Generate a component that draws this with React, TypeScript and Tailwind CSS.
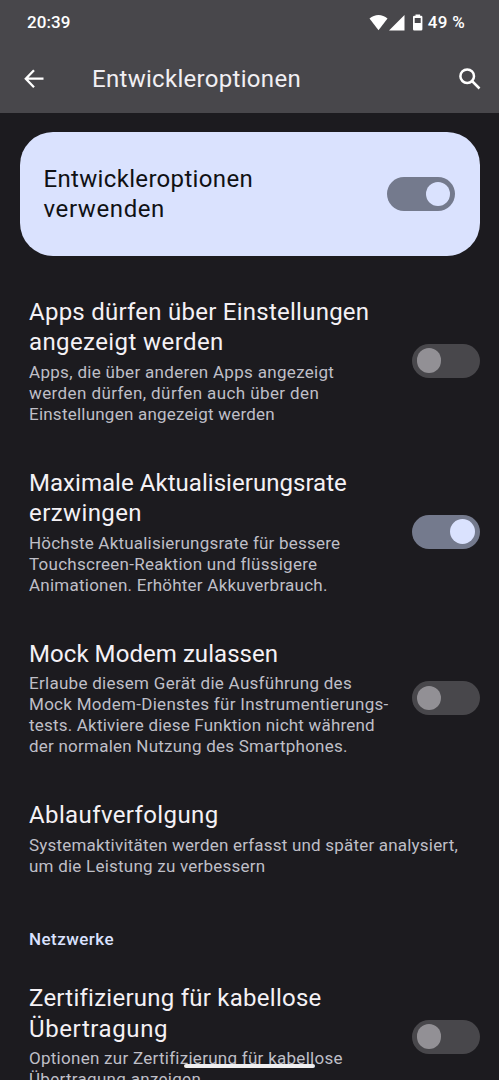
import React from "react";

type Line = { text: string; tracking?: string };

function Lines({ lines }: { lines: Line[] }) {
  return (
    <>
      {lines.map((line) => (
        <span key={line.text} className={`block whitespace-nowrap ${line.tracking ?? ""}`}>
          {line.text}
        </span>
      ))}
    </>
  );
}

function Toggle({ on = false }: { on?: boolean }) {
  return (
    <div
      role="switch"
      aria-checked={on}
      className={`flex h-[34px] w-[68px] shrink-0 items-center rounded-full px-[5px] ${
        on ? "justify-end bg-[#747a8d]" : "justify-start bg-[#48474b]"
      }`}
    >
      <div className={`size-[24.5px] rounded-full ${on ? "bg-[#dae2fe]" : "bg-[#929095]"}`} />
    </div>
  );
}

function Preference({ title, summary, on }: { title: Line[]; summary: Line[]; on?: boolean }) {
  return (
    <div className="flex shrink-0 items-center justify-between py-[21.5px] pr-[19.5px] pl-[29px]">
      <div className="min-w-0">
        <h2 className="mb-[4px] text-[24px] leading-[30.5px] text-[#f4f1f5]">
          <Lines lines={title} />
        </h2>
        <p className="text-[17px] leading-[21px] text-[#bfbfc7]">
          <Lines lines={summary} />
        </p>
      </div>
      {on !== undefined && <Toggle on={on} />}
    </div>
  );
}

export default function App() {
  return (
    <div className="relative flex h-[1080px] w-[499px] flex-col overflow-hidden bg-[#1c1b1f] font-['Roboto','Noto_Sans',sans-serif]">
      <header className="h-[113px] shrink-0 bg-[#48474b] text-white">
        <div className="flex h-[45px] items-center justify-between pt-[1px] pr-[34px] pl-[27px] text-[17px] font-medium">
          <span className="tracking-[0.1px]">20:39</span>
          <div className="flex items-center">
            <svg className="h-[18px] w-[56px]" viewBox="0 0 56 18" fill="currentColor">
              <path d="M0.5 4.6C5.7-.3 13.3-.3 18.5 4.6L9.5 16.2Z" />
              <path d="M35.5 1v15.5H20Z" />
              <path
                fillRule="evenodd"
                d="M46.5.5h4.6v1.3h1q1.3 0 1.3 1.3v12.2q0 1.3-1.3 1.3h-6.8q-1.3 0-1.3-1.3v-12.2q0-1.3 1.3-1.3h1.2ZM45.7 3.9v5h6v-5Z"
              />
            </svg>
            <span className="ml-[3px] tracking-[0.3px] whitespace-nowrap">49 %</span>
          </div>
        </div>
        <div className="flex h-[68px] items-center pr-[17px] pl-[24px]">
          <svg className="size-[20px] shrink-0" viewBox="0 0 20 20" fill="none" stroke="currentColor" strokeWidth="2.3">
            <path d="M10 1.2 1.8 9.7 10 18.2M2 9.7H19.5" />
          </svg>
          <h1 className="ml-[48px] grow text-[24px] leading-[30px] tracking-[0.3px] text-[#f1eff3]">
            Entwickleroptionen
          </h1>
          <svg className="size-[24px] shrink-0" viewBox="0 0 24 24" fill="none" stroke="currentColor" strokeWidth="2.5">
            <circle cx="9.2" cy="9.2" r="6.8" />
            <path d="M14 14 21.5 21.5" />
          </svg>
        </div>
      </header>

      <section className="mx-[19.5px] mt-[19px] mb-[19px] flex h-[124px] shrink-0 items-center justify-between rounded-[33px] bg-[#dae2fe] pr-[24.5px] pl-[24px]">
        <h2 className="text-[24px] leading-[30.5px] text-[#101114]">
          <Lines
            lines={[
              { text: "Entwickleroptionen", tracking: "tracking-[0.33px]" },
              { text: "verwenden", tracking: "tracking-[0.6px]" },
            ]}
          />
        </h2>
        <Toggle on />
      </section>

      <Preference
        title={[
          { text: "Apps dürfen über Einstellungen", tracking: "tracking-[0.25px]" },
          { text: "angezeigt werden", tracking: "tracking-[0.4px]" },
        ]}
        summary={[
          { text: "Apps, die über anderen Apps angezeigt", tracking: "tracking-[0.31px]" },
          { text: "werden dürfen, dürfen auch über den", tracking: "tracking-[0.4px]" },
          { text: "Einstellungen angezeigt werden", tracking: "tracking-[0.23px]" },
        ]}
        on={false}
      />
      <Preference
        title={[
          { text: "Maximale Aktualisierungsrate", tracking: "tracking-[0.04px]" },
          { text: "erzwingen", tracking: "tracking-[0.4px]" },
        ]}
        summary={[
          { text: "Höchste Aktualisierungsrate für bessere", tracking: "tracking-[0.21px]" },
          { text: "Touchscreen-Reaktion und flüssigere", tracking: "tracking-[0.26px]" },
          { text: "Animationen. Erhöhter Akkuverbrauch.", tracking: "tracking-[0.24px]" },
        ]}
        on
      />
      <Preference
        title={[{ text: "Mock Modem zulassen", tracking: "tracking-[0.06px]" }]}
        summary={[
          { text: "Erlaube diesem Gerät die Ausführung des", tracking: "tracking-[0.28px]" },
          { text: "Mock Modem-Dienstes für Instrumentierungs-", tracking: "tracking-[0.29px]" },
          { text: "tests. Aktiviere diese Funktion nicht während", tracking: "tracking-[0.2px]" },
          { text: "der normalen Nutzung des Smartphones.", tracking: "tracking-[0.23px]" },
        ]}
        on={false}
      />
      <Preference
        title={[{ text: "Ablaufverfolgung", tracking: "tracking-[0.38px]" }]}
        summary={[
          { text: "Systemaktivitäten werden erfasst und später analysiert,", tracking: "tracking-[0.2px]" },
          { text: "um die Leistung zu verbessern", tracking: "tracking-[0.23px]" },
        ]}
      />
      <h3 className="h-[63.5px] shrink-0 pt-[31px] pl-[29px] text-[17px] leading-[21px] font-medium tracking-[0.45px] text-[#dae2fe]">
        Netzwerke
      </h3>
      <Preference
        title={[
          { text: "Zertifizierung für kabellose", tracking: "tracking-[0.25px]" },
          { text: "Übertragung", tracking: "tracking-[0.6px]" },
        ]}
        summary={[
          { text: "Optionen zur Zertifizierung für kabellose", tracking: "tracking-[0.27px]" },
          { text: "Übertragung anzeigen", tracking: "tracking-[0.3px]" },
        ]}
        on={false}
      />

      <div className="absolute bottom-[12px] left-[184px] h-[4px] w-[131px] rounded-full bg-[#f0eff1]" />
    </div>
  );
}
